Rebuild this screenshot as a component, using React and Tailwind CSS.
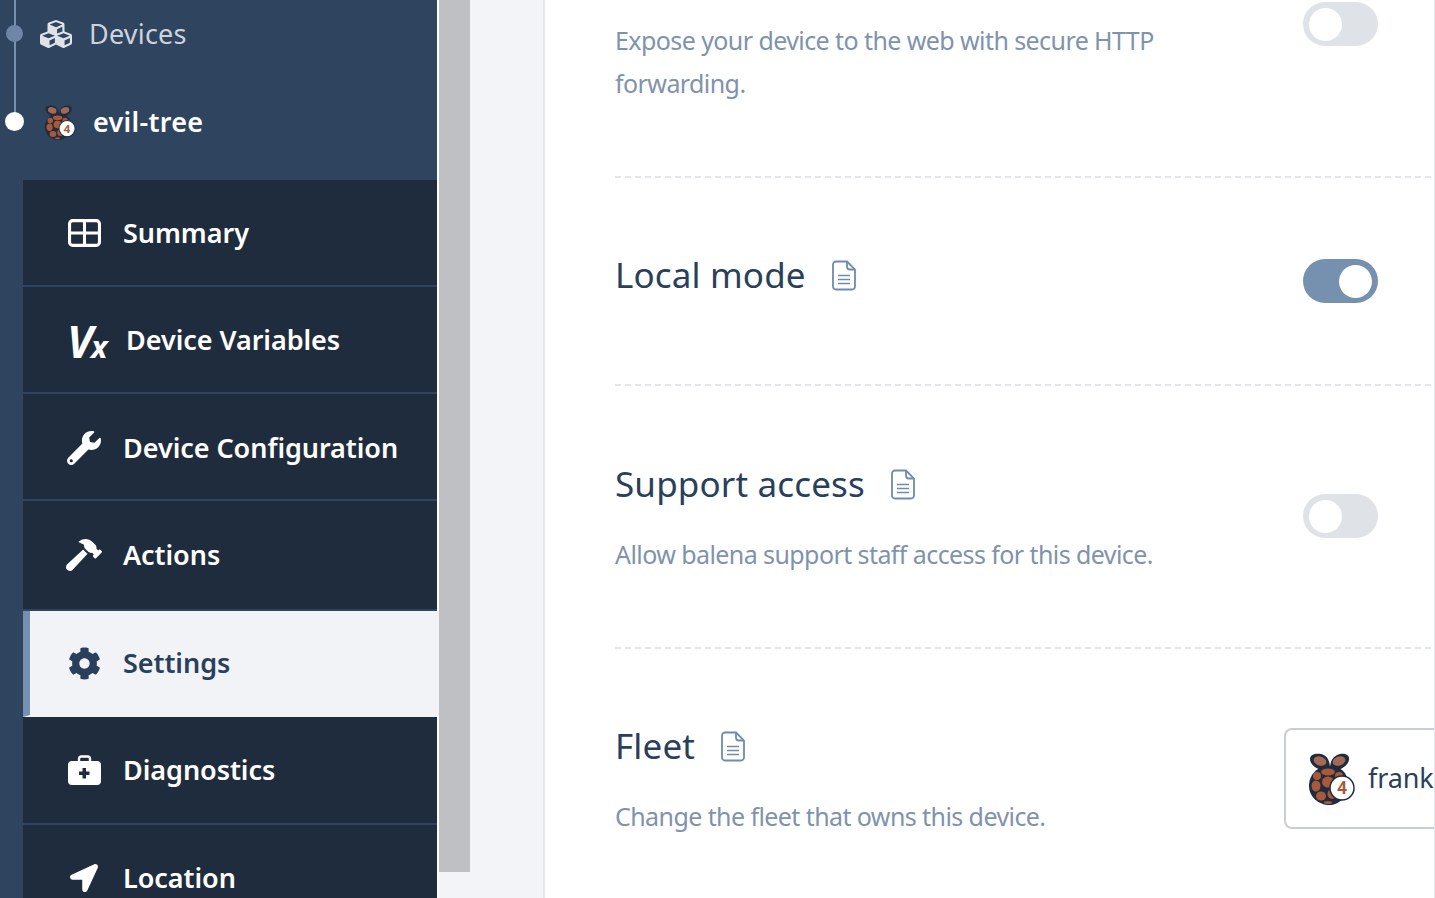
import React from 'react';
import { FaCubes, FaWrench, FaHammer, FaCog, FaLocationArrow } from 'react-icons/fa';

const FONT = { fontFamily: '"Noto Sans", sans-serif' };

const Berry = ({ className, dark = '#1f2c3d' }) => (
  <svg viewBox="0 0 47 52" className={className}>
    <path d="M20 18C10 18 2 12 2 6 2 1 8 0 13 1c6 1 9 7 9 14 0-7 4-13 10-14 5-1 10 1 9 6-1 6-9 11-19 11z" fill={dark} />
    <ellipse cx="12" cy="8" rx="6.500" ry="4.500" transform="rotate(20 12 8)" fill="#a56a55" />
    <ellipse cx="31" cy="8" rx="6.500" ry="4.500" transform="rotate(-20 31 8)" fill="#a56a55" />
    <path d="M21 13c11 0 19 6 19 18 0 13-9 21-19 21S1 44 1 33c0-11 8-20 20-20z" fill={dark} />
    <g fill="#a9583a">
      <ellipse cx="20" cy="19" rx="7" ry="3.500" />
      <ellipse cx="9" cy="23" rx="4" ry="4" />
      <ellipse cx="31" cy="23" rx="4" ry="4" />
      <ellipse cx="20" cy="29" rx="6" ry="5.500" />
      <ellipse cx="8" cy="33" rx="4.500" ry="5.500" />
      <ellipse cx="13" cy="43" rx="5" ry="4.500" />
      <ellipse cx="24" cy="41" rx="4.500" ry="5" />
      <ellipse cx="20" cy="49.500" rx="4" ry="1.500" />
    </g>
    <circle cx="34" cy="35" r="12" fill="#fff" stroke={dark} strokeWidth="1.500" />
    <text x="34" y="41" textAnchor="middle" fontSize="17" fontWeight="700" fill="#a9583a" fontFamily="Noto Sans, sans-serif">4</text>
  </svg>
);

const SummaryIcon = () => (
  <svg viewBox="0 0 32 27" className="w-[33px] h-[28px]" fill="none" stroke="currentColor" strokeWidth="3">
    <rect x="1.500" y="1.500" width="29" height="24" rx="3" />
    <path d="M1.500 13.500h29M16 1.500v24" />
  </svg>
);

const MedkitIcon = () => (
  <svg viewBox="0 0 33 30" className="w-[33px] h-[30px]">
    <path d="M11 7V4a2.500 2.500 0 0 1 2.500-2.500h6A2.500 2.500 0 0 1 22 4v3" fill="none" stroke="currentColor" strokeWidth="2.400" />
    <path
      fillRule="evenodd"
      fill="currentColor"
      d="M4 6h25a4 4 0 0 1 4 4v16a4 4 0 0 1-4 4H4a4 4 0 0 1-4-4V10a4 4 0 0 1 4-4zm10.500 7v3.500H11v3.500h3.500v3.500H18V20h3.500v-3.500H18V13z"
    />
  </svg>
);

const DocIcon = () => (
  <svg viewBox="0 0 24 31" className="w-[24px] h-[31px] shrink-0" fill="none" stroke="#6f8bad" strokeWidth="1.800">
    <path d="M15 1.500H4A3 3 0 0 0 1 4.500v22a3 3 0 0 0 3 3h16a3 3 0 0 0 3-3V9.500z" />
    <path d="M15 1.500v5a3 3 0 0 0 3 3h5" />
    <path d="M6 15.500h12M6 19.500h12M6 23.500h12" strokeWidth="1.500" />
  </svg>
);

const Toggle = ({ on }) => (
  <div className={`w-[75px] h-[44px] rounded-full flex items-center px-[6px] shrink-0 ${on ? 'bg-[#7690b0] justify-end' : 'bg-[#dfe3e8] justify-start'}`}>
    <div className="w-[33px] h-[33px] rounded-full bg-white" />
  </div>
);

const menu = [
  { label: 'Summary', icon: <SummaryIcon />, h: 'h-[107px] pt-[1px]' },
  { label: 'Device Variables', vx: true, h: 'h-[107px] pt-[2px]' },
  { label: 'Device Configuration', icon: <FaWrench className="w-[34px] h-[34px]" />, h: 'h-[107px] pt-[3px]' },
  { label: 'Actions', icon: <FaHammer className="w-[38px] h-[38px]" />, h: 'h-[110px]' },
  { label: 'Settings', icon: <FaCog className="w-[33px] h-[33px]" />, active: true, h: 'h-[106px] pt-[1px]' },
  { label: 'Diagnostics', icon: <MedkitIcon />, h: 'h-[108px]' },
  { label: 'Location', icon: <FaLocationArrow className="w-[28px] h-[28px]" />, h: 'h-[108px]' },
];

const MenuItem = ({ item }) => (
  <div
    className={`${item.h} shrink-0 flex items-center font-semibold text-[27px] tracking-[-0.05px] border-b-2 ${
      item.active
        ? 'bg-[#f2f3f6] text-[#2a3f5c] border-l-[7px] border-l-[#7690b0] border-b-[#f2f3f6] mr-[-2px] pl-[37px]'
        : 'bg-[#1f2c3d] text-white border-b-[#2f445e] pl-[44px]'
    }`}
  >
    {item.vx ? (
      <span className="w-[59px] shrink-0 italic font-bold text-[44px] leading-none tracking-[-2px]">
        V<span className="text-[31px]">x</span>
      </span>
    ) : (
      <span className="w-[36px] ml-[-1px] mr-[21px] shrink-0 flex justify-center">{item.icon}</span>
    )}
    <span>{item.label}</span>
  </div>
);

const Row = ({ className, children }) => (
  <div className={`flex justify-between border-b-2 border-dashed border-[#e3e6eb] mr-[3px] ${className}`}>{children}</div>
);

const Title = ({ children }) => (
  <div className="flex items-center gap-[26px] text-[35px] leading-[44px] text-[#2a3f5c] tracking-[0.15px]">
    <span>{children}</span>
    <DocIcon />
  </div>
);

const Desc = ({ children }) => (
  <p className="text-[25px] leading-[43px] text-[#7f93ac] tracking-[-0.58px] w-[570px]">{children}</p>
);

export default function App() {
  return (
    <div style={FONT} className="w-[1435px] h-[898px] flex overflow-hidden bg-white">
      <aside className="w-[437px] shrink-0 bg-[#2f445e] flex flex-col relative">
        <div className="absolute left-[14px] top-0 w-[2px] h-[122px] bg-[#7690b0]" />
        <div className="absolute left-[6px] top-[25px] w-[17px] h-[17px] rounded-full bg-[#6f87a5]" />
        <div className="absolute left-[5px] top-[112px] w-[19px] h-[19px] rounded-full bg-white" />
        <div className="h-[68px] pl-[40px] flex items-center gap-[17px] text-[27px] text-[#ccd3dd] tracking-[0.2px] shrink-0">
          <FaCubes className="w-[32px] h-[32px] text-[#dfe3e8]" />
          <span>Devices</span>
        </div>
        <div className="h-[112px] pb-[4px] pl-[44px] flex items-center gap-[17px] text-[27px] font-semibold text-white tracking-[0.3px] shrink-0">
          <Berry className="w-[32px] h-[35px]" />
          <span>evil-tree</span>
        </div>
        <nav className="ml-[23px] flex flex-col">
          {menu.map((item) => (
            <MenuItem key={item.label} item={item} />
          ))}
        </nav>
      </aside>

      <div className="w-[2px] shrink-0 bg-white" />

      <div className="w-[31px] shrink-0 bg-[#f3f4f7]">
        <div className="h-[872px] bg-[#bfc0c4]" />
      </div>

      <div className="w-[73px] shrink-0 bg-[#f3f4f7] border-r-2 border-[#e3e6eb] box-content" />

      <main className="flex-1 min-w-0 pl-[70px] flex flex-col border-r border-[#e3e6eb]">
        <Row className="h-[178px] pr-[53px]">
          <div className="pt-[19px]">
            <Desc>Expose your device to the web with secure HTTP forwarding.</Desc>
          </div>
          <div className="pt-[2px]"><Toggle /></div>
        </Row>
        <Row className="h-[208px] pr-[53px]">
          <div className="pt-[75px]"><Title>Local mode</Title></div>
          <div className="pt-[81px]"><Toggle on /></div>
        </Row>
        <Row className="h-[263px] pr-[53px]">
          <div className="pt-[76px]">
            <Title>Support access</Title>
            <div className="mt-[27px]"><Desc>Allow balena support staff access for this device.</Desc></div>
          </div>
          <div className="pt-[108px]"><Toggle /></div>
        </Row>
        <div className="flex justify-between overflow-hidden">
          <div className="pt-[75px] shrink-0">
            <Title>Fleet</Title>
            <div className="mt-[27px]"><Desc>Change the fleet that owns this device.</Desc></div>
          </div>
          <div className="mt-[79px] w-[150px] h-[101px] shrink-0 border-2 border-r-0 border-[#c9ced6] rounded-l-[8px] flex items-center pl-[22px] gap-[13px] text-[27px] text-[#2a3f5c] overflow-hidden">
            <Berry className="w-[47px] h-[52px] shrink-0" />
            <span className="whitespace-nowrap tracking-[-0.1px]">frank</span>
          </div>
        </div>
      </main>
    </div>
  );
}
